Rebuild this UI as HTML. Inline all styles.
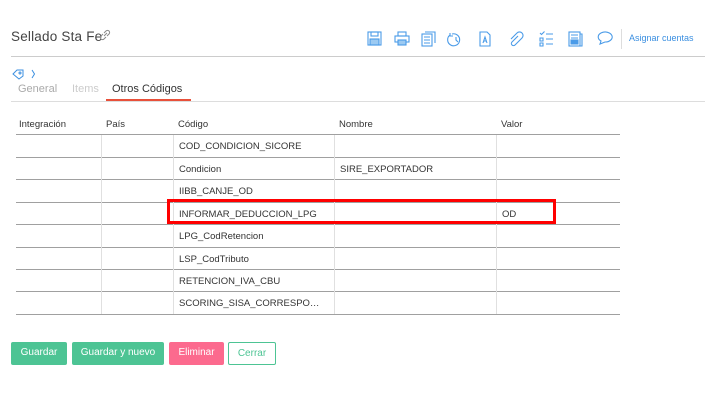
<!DOCTYPE html>
<html><head><meta charset="utf-8"><style>
*{margin:0;padding:0;box-sizing:border-box}
body{width:705px;height:405px;background:#fff;font-family:"Liberation Sans",sans-serif;position:relative;overflow:hidden;color:#333}
.a{position:absolute}
.hl{position:absolute;left:16px;width:604px;height:1px;background:#a0a0a0}
.vl{position:absolute;width:1px;background:#e0e0e0;top:135px;height:179px}
.t{position:absolute;font-size:9.5px;color:#333;white-space:nowrap}
.btn{position:absolute;top:342px;height:23px;border-radius:2px;font-size:10px;color:#fff;text-align:center;line-height:21px}
svg{position:absolute}
</style></head><body>
<div class="a" style="left:11px;top:29px;font-size:13.5px;color:#444;letter-spacing:0.2px">Sellado Sta Fe</div>
<svg style="left:98px;top:28px" width="14" height="14" viewBox="0 0 14 14" fill="none" stroke="#888" stroke-width="1"><path d="M6 8l3-3M5 6l-2 2a2 2 0 0 0 3 3l2-2M9 8l2-2a2 2 0 0 0-3-3L6 5"/></svg>
<div class="a" style="left:11px;top:56px;width:694px;height:1px;background:#ccc"></div>
<svg style="left:366px;top:30px" width="250" height="18" viewBox="0 0 250 18" fill="none" stroke="#4a9be8" stroke-width="1.1">
<rect x="2" y="2" width="13" height="13"/><rect x="5" y="2" width="7" height="4"/><rect x="4" y="9" width="9" height="6" fill="#9ccaf2"/>
<rect x="32" y="2" width="8" height="4"/><rect x="29" y="6" width="14" height="6"/><rect x="32" y="10" width="8" height="5" fill="#9ccaf2"/>
<rect x="56" y="4" width="10" height="12"/><path d="M59 2h10v11M58 7h6M58 10h6M58 13h6"/>
<path d="M86 4a6 6 0 1 1-2 1M84 3v3h3M90 7v3l2 2"/>
<path d="M114 2h7l3 3v11h-10z"/><path d="M117 13l2-6 2 6M118 11h2"/>
<path d="M152 6l-6 6a2 2 0 0 0 3 3l7-7a3.5 3.5 0 0 0-5-5l-6 6"/>
<path d="M174 3l1.5 1.5 3-3M174 8h3v3h-3zM174 13h3v3h-3zM180 4h7M180 9h7M180 14h7"/>
<rect x="203" y="2" width="11" height="14"/><path d="M214 4h2v12h-2M205 5h7M205 8h7M205 11h7" /><rect x="205" y="10" width="7" height="4" fill="#4a9be8"/>
<path d="M239 12a7 5 0 1 0-4-1l-1 3z"/>
</svg>
<div class="a" style="left:621px;top:29px;width:1px;height:20px;background:#ddd"></div>
<div class="a" style="left:629px;top:33px;font-size:9px;color:#3b8fe0">Asignar cuentas</div>
<svg style="left:12px;top:68px" width="26" height="12" viewBox="0 0 26 12" fill="none" stroke="#3b8fe0" stroke-width="1"><path d="M1 6l4-4h6v6l-4 3z"/><circle cx="8" cy="5" r="1"/><path d="M20 2l2.5 4-2.5 4"/></svg>
<div class="a" style="left:18px;top:83px;font-size:11px;color:#aaa">General</div>
<div class="a" style="left:72px;top:83px;font-size:11px;color:#ccc">Items</div>
<div class="a" style="left:112px;top:83px;font-size:11px;color:#333">Otros Códigos</div>
<div class="a" style="left:106px;top:99px;width:85px;height:2px;background:#e8503a"></div>
<div class="a" style="left:11px;top:101px;width:694px;height:1px;background:#ddd"></div>
<div class="t" style="left:19px;top:119px">Integración</div>
<div class="t" style="left:106px;top:119px">País</div>
<div class="t" style="left:178px;top:119px">Código</div>
<div class="t" style="left:339px;top:119px">Nombre</div>
<div class="t" style="left:501px;top:119px">Valor</div>
<div class="hl" style="top:134px"></div>
<div class="hl" style="top:157px"></div>
<div class="hl" style="top:179px"></div>
<div class="hl" style="top:202px"></div>
<div class="hl" style="top:224px"></div>
<div class="hl" style="top:247px"></div>
<div class="hl" style="top:269px"></div>
<div class="hl" style="top:291px"></div>
<div class="hl" style="top:314px"></div>
<div class="vl" style="left:101px"></div>
<div class="vl" style="left:173px"></div>
<div class="vl" style="left:334px"></div>
<div class="vl" style="left:496px"></div>
<div class="t" style="left:179px;top:141px">COD_CONDICION_SICORE</div>
<div class="t" style="left:179px;top:164px">Condicion</div>
<div class="t" style="left:340px;top:164px">SIRE_EXPORTADOR</div>
<div class="t" style="left:179px;top:186px">IIBB_CANJE_OD</div>
<div class="t" style="left:179px;top:209px">INFORMAR_DEDUCCION_LPG</div>
<div class="t" style="left:502px;top:209px">OD</div>
<div class="t" style="left:179px;top:231px">LPG_CodRetencion</div>
<div class="t" style="left:179px;top:254px">LSP_CodTributo</div>
<div class="t" style="left:179px;top:276px">RETENCION_IVA_CBU</div>
<div class="t" style="left:179px;top:298px">SCORING_SISA_CORRESPO…</div>
<div class="a" style="left:167px;top:199px;width:389px;height:25px;border:3px solid #f00"></div>
<div class="btn" style="left:11px;width:56px;background:#4dc494">Guardar</div>
<div class="btn" style="left:72px;width:92px;background:#4dc494">Guardar y nuevo</div>
<div class="btn" style="left:169px;width:55px;background:#fc6a8e">Eliminar</div>
<div class="btn" style="left:228px;width:48px;background:#fff;border:1px solid #4dc494;color:#4dc494">Cerrar</div>
</body></html>
